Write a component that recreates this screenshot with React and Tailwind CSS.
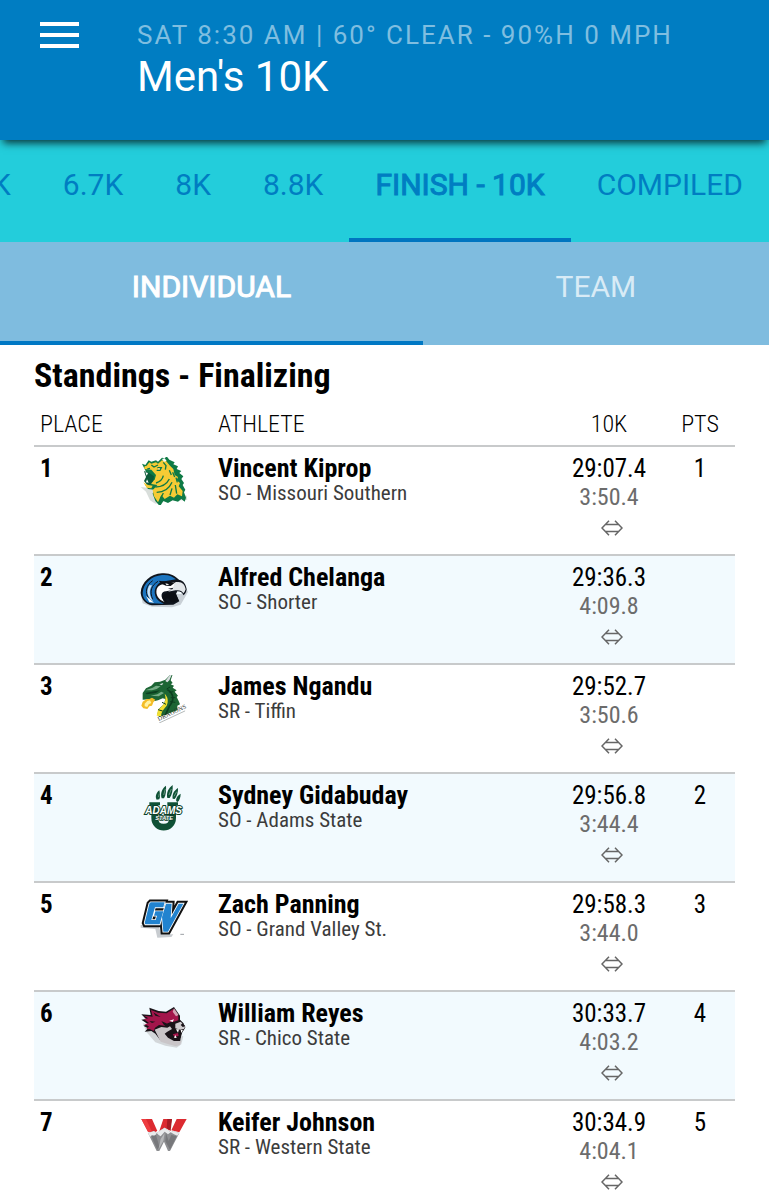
const distances = [
  { label: "5K" },
  { label: "6.7K" },
  { label: "8K" },
  { label: "8.8K" },
  { label: "Finish - 10K", active: true },
  { label: "Compiled" },
];

function LionLogo() {
  return (
    <svg viewBox="30 36 144 144" className="mx-auto size-12" role="img" aria-label="Missouri Southern">
      <path d="M32 126l16 14 12 26 16 10 22-4 12-10 24 6 38-4-2-12-80-20z" fill="#d9dedb" />
      <path
        d="M36 56l10 4 10-14 8 4 14-4 6 4 12-12 8 2 6-6 8 10 16 8-4 6 14 6-4 8 14 6-6 6 12 10-6 8 8 12-4 6 8 14-4 8 6 16-4 12-10-8-10 8-16-4-14 8-14-6-10 16-14-16-8-22 4-12-18-2-8-12 8-10-6-12 6-6-6-12z"
        fill="#0f7a46"
      />
      <path
        d="M44 64l6-2 8-10 6 4 14-4 6 4 12-10 12 2 12 14 10 10 4 18 10 6-4 10 10 8-4 10 12 14-2 16-14-6-10 10-12-6-16 10-10-12-10 22-12-18-4-18 14-16-14-2-8-4 14-10 4-14-14-16-22-2z"
        fill="#f6cb35"
      />
      <path d="M42 78l16 6 14 10-2 14-10 12-10-2-8-10 6-12z" fill="#0b5a39" />
      <path d="M40 112l14 8 14 2-4 8-14-2z" fill="#f6cb35" />
      <path d="M46 82l4 10 4-8zM48 112l3-9 5 10z" fill="#fff" />
      <path
        d="M64 60l8 6 12-6M82 68l12 0-4 8-10 0M100 52l8 10-2 12M76 126c20 0 34-8 42-24M80 142c22 0 38-12 46-30M92 160l8-16M120 150l6-20M140 146l-4-26M118 76l6 14M128 82l6 14M138 98l4 14M100 92c-2 10-10 18-22 22M60 70l-8 2"
        fill="none"
        stroke="#0f7a46"
        strokeWidth="4"
      />
      <path d="M84 70l6 1-3 3zM96 42l8-2 6 8-8 2z" fill="#fff" />
    </svg>
  );
}

function HawkLogo() {
  return (
    <svg viewBox="30 18 144 144" className="mx-auto size-12" role="img" aria-label="Shorter">
      <path d="M32 100l6 30 28 10 60 2 26-8 22-38-12-24-8 30z" fill="#c9d0d6" />
      <path
        d="M32 98C34 66 62 42 96 40c24-2 40 8 52 20 12 2 20 12 22 28-2 10-4 14-10 18-2-8-8-12-18-12l-4 8 10 22-18 10-64 2c-20-4-32-18-34-38z"
        fill="#10151d"
      />
      <path
        d="M38 98c2-28 26-50 58-53 20-2 32 5 42 13l-30 5c-12 0-20 4-26 12-8 10-10 22-6 32 4 12 12 18 26 24l-40-1c-14-4-24-16-24-32z"
        fill="#1b74bf"
      />
      <path d="M68 62C48 76 44 96 56 116M84 64C64 76 58 94 68 118" fill="none" stroke="#10151d" strokeWidth="3" />
      <path d="M58 76c-8 14-8 26 2 40l10 8c-12-16-14-32-4-48z" fill="#cfe3f4" />
      <path d="M48 108l12 10 12 10-14-2z" fill="#fff" />
      <path d="M80 88c4-12 14-16 26-16l34-6 12 6-14 10-24 4 16 4-22 4c-16 0-18 18-4 32-18-6-28-20-24-38z" fill="#fff" />
      <path d="M134 68c20-6 30 4 33 20-2 6-4 10-7 12-4-8-12-11-24-9l-22 4 14-8z" fill="#e3e7ea" />
      <path d="M100 106c10-10 26-12 38-4l8 20-16 5-8-1c-2-10-10-14-16-10l6 10-6 1c-8-6-10-14-6-21z" fill="#0c0f14" />
      <path d="M86 62l44 6 10-4-18 14-14-1-14-6z" fill="#0c0f14" />
      <path d="M106 70l12 3-8 3z" fill="#fff" />
    </svg>
  );
}

function DragonLogo() {
  return (
    <svg viewBox="30 30 144 144" className="mx-auto size-12" role="img" aria-label="Tiffin">
      <path
        d="M38 84l10-14 16-8 10-10 16-2 16-6 16-16 6 0-6 18 6 8-6 4 10 4-4 6 12 8-6 4 10 12-4 4 6 12 4 10-8 4 0 14-54 20-6-8 4-16 16-14 4-16-8-2-14 6-20 4 4-8-30 2z"
        fill="#1c6534"
      />
      <path d="M46 76l22-8 10-6 14 2-12 8-14 4zM62 92l20-4 12-8 8 4-16 10z" fill="#76ad86" />
      <path d="M46 84l30-6 14-2-12 8-28 4z" fill="#0c3f20" />
      <path d="M106 48l14-18 5 0-7 16-6 6zM88 58l12-4-4 7z" fill="#d9dee0" />
      <path d="M104 86c8 22-4 36-20 48l-4 18 14 2c-2-12 8-22 16-32 6-14 4-26-6-36z" fill="#f0df2f" />
      <path d="M112 74c22 14 20 32 6 50l-12 26" fill="none" stroke="#0c3f20" strokeWidth="5" />
      <path d="M120 66l-10 6M130 80l-12 2M136 98l-14 0M136 112l-16-2M96 112l12 6M84 134l14 4" stroke="#0c3f20" strokeWidth="3" />
      <path d="M66 98l-8 4-8 0-12 8-4 12 6 8 12 2 6-8 8-2 4-10 6-8z" fill="#f4bd27" />
      <path d="M60 106l-8 2-8 8 0 8 8 2 4-8 8-4z" fill="#fff3a3" />
      <g transform="rotate(-25 88 166)">
        <text x="86" y="167" fontFamily="Liberation Serif, serif" fontSize="19" fill="#2a3230">
          DRAGONS
        </text>
        <path d="M84 173H170" stroke="#9aa0a0" strokeWidth="2" />
      </g>
    </svg>
  );
}

function AdamsLogo() {
  return (
    <svg viewBox="30 27 144 144" className="mx-auto size-12" role="img" aria-label="Adams State">
      <path d="M74 86v42c0 38 54 38 54 0V86" fill="none" stroke="#0f5136" strokeWidth="20" />
      <path d="M58 82h32v9H58zM112 82h32v9h-32z" fill="#0f5136" />
      <path
        d="M80 74c-6-10 0-22 8-28 2 10 4 20 0 27zM95 70c-5-16 2-30 13-38 1 14 0 28-6 38zM112 69c-4-16 4-30 16-39 1 16-2 30-9 39zM128 71c-2-14 4-24 16-32 1 14-4 26-10 33zM139 79c-2-10 4-18 13-23 0 12-4 20-9 25z"
        fill="#0f5136"
      />
      <path d="M88 56l-2 10M106 42l-5 18M124 42l-7 18M140 50l-8 14" stroke="#8fb3a2" strokeWidth="2" />
      <text
        x="46"
        y="117"
        fontFamily="Liberation Sans, sans-serif"
        fontWeight="700"
        fontStyle="italic"
        fontSize="30"
        fill="#fff"
        stroke="#0c3f2a"
        strokeWidth="6"
        paintOrder="stroke"
      >
        ADAMS
      </text>
      <text
        x="76"
        y="135"
        fontFamily="Liberation Sans, sans-serif"
        fontWeight="700"
        fontStyle="italic"
        fontSize="17"
        fill="#fff"
        stroke="#0c3f2a"
        strokeWidth="4"
        paintOrder="stroke"
      >
        STATE
      </text>
    </svg>
  );
}

function GrandValleyLogo() {
  const g = "M62 52h42l-4 15H75l-11 38h13l4-13h-9l4-13h24l-11 39H46l-2-4 14-58z";
  const v = "M108 56h17l-3 44 24-44h14l-46 84h-14l-4-44z";
  return (
    <svg viewBox="30 24 144 144" className="mx-auto size-12" role="img" aria-label="Grand Valley St.">
      <path d="M32 128l44 4 6 26 42-2 6-8-36 0-8-26-54-2z" fill="#c8ccd0" />
      <path d={g} fill="#111" stroke="#111" strokeWidth="17" />
      <path d={v} fill="#111" stroke="#111" strokeWidth="17" />
      <path d={g} fill="#fff" stroke="#fff" strokeWidth="5" />
      <path d={v} fill="#fff" stroke="#fff" strokeWidth="5" />
      <path d={g} fill="#2283cf" />
      <path d={v} fill="#2283cf" />
      <path d="M151 148h11" stroke="#9a9fa4" strokeWidth="3" />
    </svg>
  );
}

function WildcatLogo() {
  return (
    <svg viewBox="30 21 144 144" className="mx-auto size-12" role="img" aria-label="Chico State">
      <path d="M38 84l12 28 26 30 30 10 34 6 14-10 6-24z" fill="#d3d7da" />
      <path
        d="M34 58l28 2-4-22 28 10 22 2 24-14 18 26 0 12 10 10 6 14-8 12-4 6-4 26-12 6-22-6-26-8-14-18-12-8-20 2 10-10-14-8 14-4-20-14 14-2z"
        fill="#191318"
      />
      <path
        d="M42 62l26 3-5-20 21 8 26 2 20-13 15 22 0 12-14 4-16 4-12 8-16-2-12 8-4 10-12-6-10 0 8-8-14-6 14-4-16-12 14-2z"
        fill="#a3154b"
      />
      <path d="M132 40l14 20-8 4-10-14z" fill="#d3a0b2" />
      <path d="M70 52l22 14-16-4zM58 78l18 2-10 4zM94 78l18 8 12-6 8 4-14 8-16-2z" fill="#191318" />
      <path d="M118 77l14-4-4 8z" fill="#fff" />
      <path d="M74 104l20-8 18 2 8-4 6 8-14 8-8 6 10 12 18 10 22 0-4 12-12 4-22-6-24-8z" fill="#c9c5c8" />
      <path d="M136 86l16-6 14 14-4 8-12 2-14-4z" fill="#cfcbce" />
      <path d="M158 84l8 10-8 2-6-6z" fill="#191318" />
      <path d="M118 112l22-8 18 2-6 22-18 2z" fill="#191318" />
      <path d="M128 118l16-4 2 8-12 4z" fill="#a3154b" />
      <path d="M138 103l6 10 3-10zM152 104l2 10 5-8zM132 128l4-8 4 9z" fill="#fff" />
    </svg>
  );
}

function WesternLogo() {
  return (
    <svg viewBox="30 18 144 144" className="mx-auto size-12" role="img" aria-label="Western State">
      <path d="M34 42h32l16 36-8 4-20-2zM100 42h26l-8 34-14-8-16 10zM140 42h30l-22 40-24-6z" fill="#dc2a30" />
      <path d="M34 42h14l18 38H54z" fill="#ee3d41" />
      <path d="M112 42h14l-4 36-12-8z" fill="#a71c24" />
      <path d="M54 84l18-6 8 6 24-16 18 14 8-4 18 6-28 54h-6l-12-28-14 28h-8z" fill="#8e8f92" />
      <path d="M54 84l18-6 8 6-6 10-8-4-6 6zM80 84l24-16 18 14-8 6-10-8-12 14-6-4zM122 82l8-4 18 6-6 8-10-4z" fill="#e9eaeb" />
      <path d="M108 84l8 24 8-18 16 4-20 40-14-26zM64 94l18 40 6-10-10-34z" fill="#77787b" />
      <path d="M104 84l-4 24-14 24 6-30z" fill="#b6b7b9" />
    </svg>
  );
}

const standings = [
  { place: 1, Logo: LionLogo, name: "Vincent Kiprop", team: "SO - Missouri Southern", time: "29:07.4", split: "3:50.4", pts: "1" },
  { place: 2, Logo: HawkLogo, name: "Alfred Chelanga", team: "SO - Shorter", time: "29:36.3", split: "4:09.8", pts: "" },
  { place: 3, Logo: DragonLogo, name: "James Ngandu", team: "SR - Tiffin", time: "29:52.7", split: "3:50.6", pts: "" },
  { place: 4, Logo: AdamsLogo, name: "Sydney Gidabuday", team: "SO - Adams State", time: "29:56.8", split: "3:44.4", pts: "2" },
  { place: 5, Logo: GrandValleyLogo, name: "Zach Panning", team: "SO - Grand Valley St.", time: "29:58.3", split: "3:44.0", pts: "3" },
  { place: 6, Logo: WildcatLogo, name: "William Reyes", team: "SR - Chico State", time: "30:33.7", split: "4:03.2", pts: "4" },
  { place: 7, Logo: WesternLogo, name: "Keifer Johnson", team: "SR - Western State", time: "30:34.9", split: "4:04.1", pts: "5" },
];

function NoChangeArrow() {
  return (
    <svg viewBox="0 0 22 16" className="h-4 w-[22px]" fill="none" stroke="#666" strokeWidth="1.5" role="img" aria-label="No change">
      <path d="M8 .8L1 8l7 7.2M14 .8L21 8l-7 7.2M4.6 4.5h12.8M4.6 11.5h12.8" />
    </svg>
  );
}

export default function App() {
  return (
    <div className="min-h-screen bg-white font-['Roboto',sans-serif] text-black">
      <header className="relative flex h-[140px] items-start bg-[#007dc2] pt-[21px] pl-10 shadow-[0_6px_8px_-3px_rgba(0,0,0,0.75)]">
        <button type="button" aria-label="Open menu" className="mt-px flex w-[39px] flex-col gap-[7px]">
          <span className="h-1 w-full bg-white" />
          <span className="h-1 w-full bg-white" />
          <span className="h-1 w-full bg-white" />
        </button>
        <div className="ml-[58px]">
          <p className="text-[26px] leading-7 tracking-[2px] whitespace-nowrap text-[#7fbee0]">SAT 8:30 AM | 60° CLEAR - 90%H 0 MPH</p>
          <h1 className="text-[42px] leading-[56px] text-white">Men's 10K</h1>
        </div>
      </header>

      <nav aria-label="Distances" className="flex h-[102px] justify-end overflow-hidden bg-[#23cddb]">
        {distances.map((d) => (
          <a
            key={d.label}
            href="#standings"
            aria-current={d.active ? "page" : undefined}
            className={
              "shrink-0 border-b-4 px-[26px] pt-[25px] text-[30px] leading-10 whitespace-nowrap uppercase text-[#007dc2] " +
              (d.active ? "border-[#0075c0] [-webkit-text-stroke:1px_#007dc2]" : "border-transparent")
            }
          >
            {d.label}
          </a>
        ))}
      </nav>

      <nav aria-label="Result type" className="flex h-[103px] bg-[#7fbcdf] text-[30px] leading-10 uppercase">
        <a href="#standings" aria-current="page" className="w-[55%] border-b-4 border-[#0078c4] pt-[25px] text-center text-white [-webkit-text-stroke:1px_#fff]">
          Individual
        </a>
        <a href="#team" className="w-[45%] pt-[25px] text-center text-[#d8ebf6]">
          Team
        </a>
      </nav>

      <main id="standings" className="px-[34px] pt-[10px] font-['Roboto_Condensed',Roboto,sans-serif]">
        <h2 className="text-[34px] leading-10 font-bold">Standings - Finalizing</h2>
        <table className="w-full table-fixed border-collapse">
          <thead>
            <tr className="h-[51px] text-2xl">
              <th scope="col" className="w-[82px] pt-[7px] pl-[6px] text-left font-light">PLACE</th>
              <th scope="col" className="w-24" aria-label="Team logo" />
              <th scope="col" className="pt-[7px] pl-[6px] text-left font-light">ATHLETE</th>
              <th scope="col" className="w-[112px] pt-[7px] font-light">10K</th>
              <th scope="col" className="w-[70px] pt-[7px] font-light">PTS</th>
            </tr>
          </thead>
          <tbody>
            {standings.map(({ place, Logo, name, team, time, split, pts }) => (
              <tr key={place} className="h-[109px] border-t-2 border-[#c8cacb] align-top even:bg-[#f2fafe]">
                <td className="pt-[6px] pl-[6px] text-[25px] leading-8 font-bold">{place}</td>
                <td className="pt-[10px]">
                  <Logo />
                </td>
                <td className="pt-[6px] pl-[6px]">
                  <p className="text-[26px] leading-[30px] font-bold">{name}</p>
                  <p className="text-[21px] leading-5 text-[#3c3c3c]">{team}</p>
                </td>
                <td className="pt-[6px] text-center">
                  <p className="text-[25px] leading-8">{time}</p>
                  <p className="text-2xl leading-6 text-[#6c6c6c]">{split}</p>
                  <div className="flex justify-center pt-[11px] pl-[6px]">
                    <NoChangeArrow />
                  </div>
                </td>
                <td className="pt-[6px] text-center text-[25px] leading-8">{pts}</td>
              </tr>
            ))}
          </tbody>
        </table>
      </main>
    </div>
  );
}
